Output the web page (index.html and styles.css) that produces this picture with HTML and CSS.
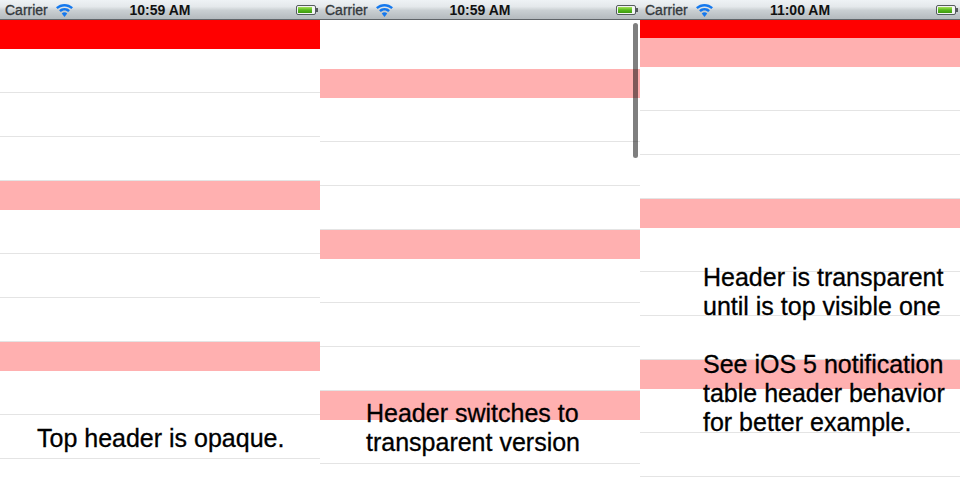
FILE: index.html
```html
<!DOCTYPE html>
<html lang="en">

<head>
  <meta charset="UTF-8">
  <title>Table header behaviour</title>
  <link rel="stylesheet" href="styles.css">
</head>

<body>
  <div class="phones">

    <div class="phone">
      <div class="status-bar">
        <span class="carrier">Carrier</span>
        <svg class="wifi" viewBox="0 0 17 13"><path d="M8.500 0C5.300 0 2.400 1.200 0 3.300l1.700 1.800C3.500 3.400 5.900 2.400 8.500 2.400s5 1 6.800 2.700L17 3.300C14.600 1.200 11.700 0 8.500 0z"/><path d="M8.500 4.100c-2.100 0-4 .8-5.400 2.100l1.700 1.800c1-.9 2.300-1.500 3.700-1.500s2.700.6 3.700 1.500l1.700-1.800c-1.400-1.300-3.300-2.100-5.400-2.100z"/><path d="M8.500 8.300c-1 0-2 .4-2.700 1.100L8.500 13l2.700-3.600c-.7-.7-1.700-1.100-2.700-1.100z"/></svg>
        <span class="clock">10:59 AM</span>
        <span class="battery"><span class="battery-fill"></span></span>
      </div>
      <div class="table">
        <div class="section section-opaque"></div>
        <div class="row"></div>
        <div class="row"></div>
        <div class="row"></div>
        <div class="section"></div>
        <div class="row"></div>
        <div class="row"></div>
        <div class="row"></div>
        <div class="section"></div>
        <div class="row"></div>
        <div class="row"></div>
        <div class="row"></div>
      </div>
      <p class="caption caption-top">Top header is opaque.</p>
    </div>

    <div class="phone">
      <div class="status-bar">
        <span class="carrier">Carrier</span>
        <svg class="wifi" viewBox="0 0 17 13"><path d="M8.500 0C5.300 0 2.400 1.200 0 3.300l1.700 1.800C3.500 3.400 5.900 2.400 8.500 2.400s5 1 6.800 2.700L17 3.300C14.600 1.200 11.700 0 8.500 0z"/><path d="M8.500 4.100c-2.100 0-4 .8-5.400 2.100l1.700 1.800c1-.9 2.300-1.500 3.700-1.500s2.700.6 3.700 1.500l1.700-1.800c-1.400-1.300-3.300-2.100-5.400-2.100z"/><path d="M8.500 8.300c-1 0-2 .4-2.700 1.100L8.500 13l2.700-3.600c-.7-.7-1.700-1.100-2.700-1.100z"/></svg>
        <span class="clock">10:59 AM</span>
        <span class="battery"><span class="battery-fill"></span></span>
      </div>
      <div class="table">
        <div class="row row-scrolled"></div>
        <div class="section"></div>
        <div class="row"></div>
        <div class="row"></div>
        <div class="row"></div>
        <div class="section"></div>
        <div class="row"></div>
        <div class="row"></div>
        <div class="row"></div>
        <div class="section"></div>
        <div class="row"></div>
      </div>
      <div class="scroll-thumb"></div>
      <p class="caption caption-switch">Header switches to<br>transparent version</p>
    </div>

    <div class="phone">
      <div class="status-bar">
        <span class="carrier">Carrier</span>
        <svg class="wifi" viewBox="0 0 17 13"><path d="M8.500 0C5.300 0 2.400 1.200 0 3.300l1.700 1.800C3.500 3.400 5.900 2.400 8.500 2.400s5 1 6.800 2.700L17 3.300C14.600 1.200 11.700 0 8.500 0z"/><path d="M8.500 4.100c-2.100 0-4 .8-5.400 2.100l1.700 1.800c1-.9 2.300-1.500 3.700-1.500s2.700.6 3.700 1.500l1.700-1.800c-1.400-1.300-3.300-2.100-5.400-2.100z"/><path d="M8.500 8.300c-1 0-2 .4-2.700 1.100L8.500 13l2.700-3.600c-.7-.7-1.700-1.100-2.700-1.100z"/></svg>
        <span class="clock">11:00 AM</span>
        <span class="battery"><span class="battery-fill"></span></span>
      </div>
      <div class="table">
        <div class="section section-opaque section-pushed"></div>
        <div class="section"></div>
        <div class="row"></div>
        <div class="row"></div>
        <div class="row"></div>
        <div class="section"></div>
        <div class="row"></div>
        <div class="row"></div>
        <div class="row"></div>
        <div class="section"></div>
        <div class="row"></div>
        <div class="row"></div>
      </div>
      <p class="caption caption-transparent">Header is transparent<br>until is top visible one<br><br>See iOS 5 notification<br>table header behavior<br>for better example.</p>
    </div>

  </div>
</body>

</html>
```

FILE: styles.css
```css
:root {
  --header-red: #FF0000;
  --header-pink: #FFB0B0;
  --separator: #E4E4E4;
  --text: #000000;
}

* {
  box-sizing: border-box;
  margin: 0;
  padding: 0;
}

body {
  font-family: "Liberation Sans", Arial, sans-serif;
  background: #FFFFFF;
  color: var(--text);
  overflow: hidden;
}

.phones {
  display: flex;
  width: 960px;
  height: 480px;
}

.phone {
  position: relative;
  display: flex;
  flex-direction: column;
  width: 320px;
  height: 480px;
  overflow: hidden;
}

/* Status bar */
.status-bar {
  position: relative;
  display: flex;
  flex: none;
  align-items: center;
  height: 20px;
  padding: 1px 2px 0 5px;
  background: linear-gradient(#EEF2F5, #E4E8EB 35%, #C9CFD2 55%, #B4BABE);
  border-bottom: 1px solid #5F6468;
}

.carrier {
  font-size: 14px;
  color: #33383C;
  -webkit-text-stroke: 0.3px #33383C;
}

.wifi {
  width: 17px;
  height: 13px;
  margin-left: 8px;
  fill: #1478EE;
}

.clock {
  position: absolute;
  left: 0;
  right: 0;
  text-align: center;
  font-size: 14px;
  font-weight: 700;
  color: #111111;
}

.battery {
  position: relative;
  display: block;
  width: 20px;
  height: 10px;
  margin-left: auto;
  margin-right: 2px;
  padding: 1px 3px 1px 1px;
  background: #F2F4F4;
  border: 1px solid #555B5E;
  border-radius: 2px;
}

.battery::after {
  content: '';
  position: absolute;
  top: 2px;
  right: -3px;
  width: 2px;
  height: 4px;
  background: #555B5E;
}

.battery-fill {
  display: block;
  height: 100%;
  background: linear-gradient(#A6E25A, #55B81C 50%, #3E9A10);
}

/* Table */
.table {
  flex: 1;
  overflow: hidden;
}

.section {
  height: 29px;
  background: var(--header-pink);
}

.section-opaque {
  background: var(--header-red);
}

.section-pushed {
  height: 18px;
}

.row {
  height: 44px;
  border-bottom: 1px solid var(--separator);
}

.row-scrolled {
  height: 49px;
  border-bottom: none;
}

.scroll-thumb {
  position: absolute;
  top: 23px;
  right: 2px;
  width: 5px;
  height: 135px;
  background: rgba(0, 0, 0, 0.5);
  border-radius: 3px;
}

/* Captions over the table */
.caption {
  position: absolute;
  font-size: 25px;
  line-height: 29px;
  -webkit-text-stroke: 0.3px var(--text);
}

.caption-top {
  top: 424px;
  left: 37px;
}

.caption-switch {
  top: 399px;
  left: 46px;
}

.caption-transparent {
  top: 263px;
  left: 63px;
}
```
